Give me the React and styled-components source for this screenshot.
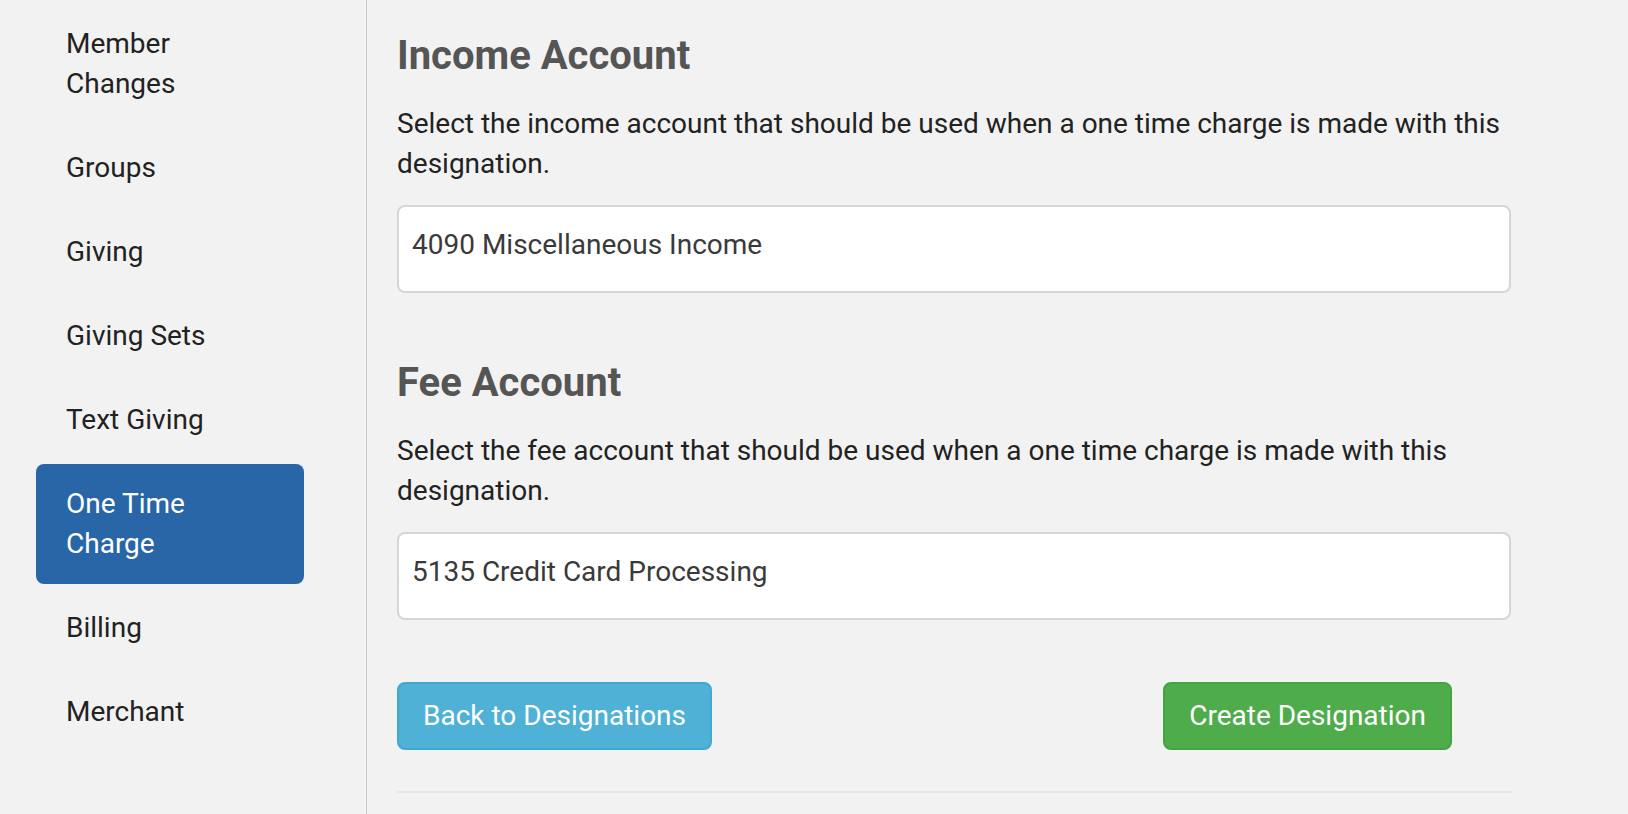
import React from "react";
import styled, { createGlobalStyle } from "styled-components";

const GlobalStyle = createGlobalStyle`
  html, body {
    margin: 0;
    padding: 0;
    background: #f2f2f2;
  }
  body {
    font-family: Roboto, "Liberation Sans", Arial, sans-serif;
    font-size: 28px;
    line-height: 40px;
    color: #222;
  }
  * { box-sizing: border-box; }
`;

const Layout = styled.div`
  display: flex;
  min-height: 814px;
  background: #f2f2f2;
`;

const Sidebar = styled.aside`
  flex: 0 0 367px;
  width: 367px;
  padding: 4px 62px 0 36px;
  border-right: 1px solid #c9c9c9;
`;

const NavList = styled.ul`
  list-style: none;
  margin: 0;
  padding: 0;
  display: flex;
  flex-direction: column;
  gap: 4px;
`;

const NavLink = styled.a`
  display: block;
  padding: 20px 30px;
  font-size: 28px;
  line-height: 40px;
  border-radius: 8px;
  text-decoration: none;
  color: ${(p) => (p.$active ? "#ffffff" : "#222222")};
  background: ${(p) => (p.$active ? "#2866a8" : "transparent")};
`;

const Main = styled.main`
  flex: 1;
  min-width: 0;
  padding: 32px 117px 0 30px;
  display: flex;
  flex-direction: column;
  gap: 66px;
`;

const Section = styled.section`
  display: flex;
  flex-direction: column;
`;

const Heading = styled.h3`
  margin: 0 0 24px;
  font-size: 40px;
  line-height: 48px;
  font-weight: 700;
  color: #555555;
`;

const Description = styled.p`
  margin: 0 0 21px;
  font-size: 28px;
  line-height: 40px;
  color: #222222;
`;

const SelectBox = styled.div`
  height: 88px;
  padding: 18px 13px 26px;
  background: #ffffff;
  border: 2px solid #d6d6d6;
  border-radius: 8px;
  font-size: 28px;
  line-height: 40px;
  color: #3a3a3a;
`;

const ButtonRow = styled.div`
  display: flex;
  justify-content: space-between;
  align-items: center;
  padding-right: 59px;
  margin-top: -4px;
`;

const Button = styled.button`
  font-family: inherit;
  font-size: 28px;
  line-height: 40px;
  padding: 12px 24px;
  border-radius: 8px;
  border: 2px solid ${(p) => (p.$variant === "success" ? "#45a341" : "#44a7d0")};
  background: ${(p) => (p.$variant === "success" ? "#4fac4b" : "#4fb1d6")};
  color: #ffffff;
  cursor: pointer;
`;

const Divider = styled.hr`
  margin: 41px 0 0;
  border: 0;
  border-top: 2px solid #e6e6e6;
`;

const Footer = styled.div`
  display: flex;
  flex-direction: column;
`;

const navItems = [
  "Member Changes",
  "Groups",
  "Giving",
  "Giving Sets",
  "Text Giving",
  "One Time Charge",
  "Billing",
  "Merchant",
];

export default function App() {
  return (
    <>
      <GlobalStyle />
      <Layout>
        <Sidebar>
          <NavList>
            {navItems.map((item) => (
              <li key={item}>
                <NavLink href="#" $active={item === "One Time Charge"}>
                  {item}
                </NavLink>
              </li>
            ))}
          </NavList>
        </Sidebar>
        <Main>
          <Section>
            <Heading>Income Account</Heading>
            <Description>
              Select the income account that should be used when a one time charge is made with this designation.
            </Description>
            <SelectBox>4090 Miscellaneous Income</SelectBox>
          </Section>
          <Section>
            <Heading>Fee Account</Heading>
            <Description>
              Select the fee account that should be used when a one time charge is made with this designation.
            </Description>
            <SelectBox>5135 Credit Card Processing</SelectBox>
          </Section>
          <Footer>
            <ButtonRow>
              <Button $variant="info">Back to Designations</Button>
              <Button $variant="success">Create Designation</Button>
            </ButtonRow>
            <Divider />
          </Footer>
        </Main>
      </Layout>
    </>
  );
}
